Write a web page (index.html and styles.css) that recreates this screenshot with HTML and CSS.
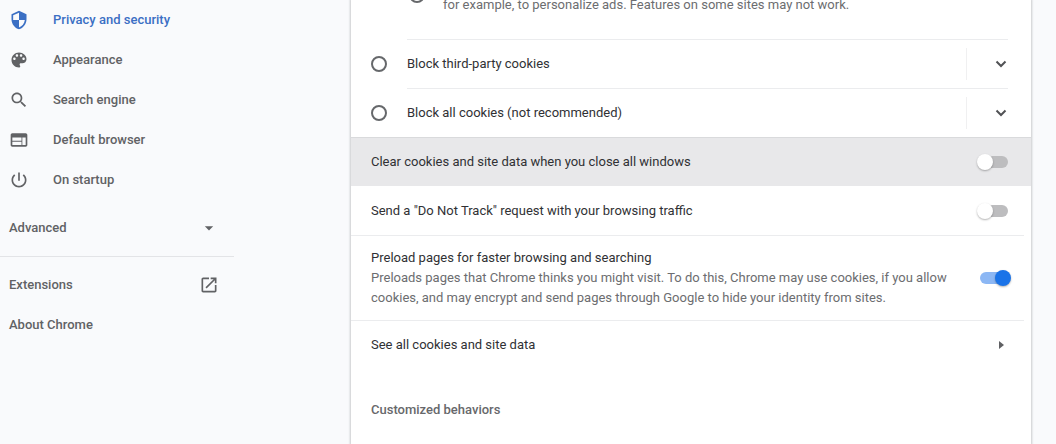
FILE: index.html
```html
<!DOCTYPE html>
<html lang="en">
<head>
<meta charset="utf-8">
<title>Settings - Privacy and security</title>
<link rel="stylesheet" href="styles.css">
</head>
<body>
<div class="page">
  <nav class="sidebar" aria-label="Settings">
    <a class="nav-item selected" href="#privacy">
      <svg class="icon" viewBox="0 0 24 24"><path d="M12 1L3 5v6c0 5.550 3.840 10.740 9 12 5.160-1.260 9-6.450 9-12V5l-9-4zm0 10.990h7c-.53 4.120-3.280 7.790-7 8.940V12H5V6.300l7-3.110v8.800z"/></svg>
      <span>Privacy and security</span>
    </a>
    <a class="nav-item" href="#appearance">
      <svg class="icon" viewBox="0 0 24 24"><path d="M12 3c-4.970 0-9 4.030-9 9s4.030 9 9 9c.83 0 1.500-.67 1.500-1.500 0-.39-.15-.74-.39-1.010-.23-.26-.38-.61-.38-.99 0-.83.67-1.500 1.500-1.500H16c2.760 0 5-2.240 5-5 0-4.420-4.030-8-9-8zm-5.500 9c-.83 0-1.500-.67-1.500-1.500S5.670 9 6.500 9 8 9.670 8 10.500 7.330 12 6.500 12zm3-4C8.670 8 8 7.330 8 6.500S8.670 5 9.500 5s1.500.67 1.500 1.500S10.330 8 9.500 8zm5 0c-.83 0-1.500-.67-1.500-1.500S13.670 5 14.500 5s1.500.67 1.500 1.500S15.330 8 14.500 8zm3 4c-.83 0-1.500-.67-1.500-1.500S16.670 9 17.500 9s1.500.67 1.500 1.500-.67 1.500-1.500 1.500z"/></svg>
      <span>Appearance</span>
    </a>
    <a class="nav-item" href="#search">
      <svg class="icon" viewBox="0 0 24 24"><path d="M15.500 14h-.79l-.28-.27C15.410 12.590 16 11.110 16 9.500 16 5.910 13.090 3 9.500 3S3 5.910 3 9.500 5.910 16 9.500 16c1.610 0 3.090-.59 4.230-1.570l.27.28v.79l5 4.990L20.490 19l-4.990-5zm-6 0C7.010 14 5 11.990 5 9.500S7.010 5 9.500 5 14 7.010 14 9.500 11.990 14 9.500 14z"/></svg>
      <span>Search engine</span>
    </a>
    <a class="nav-item" href="#default-browser">
      <svg class="icon" viewBox="0 0 24 24"><path d="M20 4H4c-1.100 0-1.990.9-1.990 2L2 18c0 1.100.9 2 2 2h16c1.100 0 2-.9 2-2V6c0-1.100-.9-2-2-2zm-5 14H4v-4h11v4zm0-5H4V9h11v4zm5 5h-4V9h4v9z"/></svg>
      <span>Default browser</span>
    </a>
    <a class="nav-item" href="#startup">
      <svg class="icon" viewBox="0 0 24 24"><path d="M13 3h-2v10h2V3zm4.830 2.170l-1.420 1.420C17.990 7.860 19 9.810 19 12c0 3.870-3.130 7-7 7s-7-3.130-7-7c0-2.190 1.010-4.140 2.580-5.420L6.170 5.170C4.230 6.820 3 9.260 3 12c0 4.970 4.030 9 9 9s9-4.030 9-9c0-2.740-1.230-5.180-3.170-6.830z"/></svg>
      <span>On startup</span>
    </a>
    <button class="nav-item advanced" type="button">
      <span>Advanced</span>
      <svg class="icon" viewBox="0 0 24 24"><path d="M7 10l5 5 5-5z"/></svg>
    </button>
    <div class="nav-more">
      <a class="nav-item spread" href="#extensions">
        <span>Extensions</span>
        <svg class="icon" viewBox="0 0 24 24"><path d="M19 19H5V5h7V3H5c-1.110 0-2 .9-2 2v14c0 1.100.89 2 2 2h14c1.100 0 2-.9 2-2v-7h-2v7zM14 3v2h3.590l-9.830 9.830 1.410 1.410L19 6.410V10h2V3h-7z"/></svg>
      </a>
      <a class="nav-item spread" href="#about"><span>About Chrome</span></a>
    </div>
  </nav>

  <main class="panel">
    <div class="scrolled-detail">
      <input class="radio" type="radio" name="detail" aria-label="Block on some sites">
      <p class="secondary">for example, to personalize ads. Features on some sites may not work.</p>
    </div>
    <div class="option">
      <input class="radio" type="radio" name="cookies" id="block-third">
      <div class="option-body">
        <label for="block-third">Block third-party cookies</label>
        <button class="expand" type="button" aria-label="Expand third-party cookies">
          <svg viewBox="0 0 12 8"><path d="M1.500 1.500L6 6l4.500-4.500"/></svg>
        </button>
      </div>
    </div>
    <div class="option">
      <input class="radio" type="radio" name="cookies" id="block-all">
      <div class="option-body">
        <label for="block-all">Block all cookies (not recommended)</label>
        <button class="expand" type="button" aria-label="Expand all cookies">
          <svg viewBox="0 0 12 8"><path d="M1.500 1.500L6 6l4.500-4.500"/></svg>
        </button>
      </div>
    </div>
    <div class="row highlighted">
      <label for="clear">Clear cookies and site data when you close all windows</label>
      <input class="toggle" type="checkbox" id="clear">
    </div>
    <div class="row">
      <label for="dnt">Send a "Do Not Track" request with your browsing traffic</label>
      <input class="toggle" type="checkbox" id="dnt">
    </div>
    <div class="row ruled tall">
      <label for="preload">Preload pages for faster browsing and searching
        <span class="secondary">Preloads pages that Chrome thinks you might visit. To do this, Chrome may use cookies, if you allow cookies, and may encrypt and send pages through Google to hide your identity from sites.</span>
      </label>
      <input class="toggle" type="checkbox" id="preload" checked>
    </div>
    <a class="row ruled" href="#all-cookies">
      <span>See all cookies and site data</span>
      <svg class="arrow" viewBox="0 0 20 20"><path d="M8 6l5 4-5 4z"/></svg>
    </a>
    <h2 class="section-title">Customized behaviors</h2>
  </main>
</div>
</body>
</html>
```
FILE: styles.css
```css
* {
  box-sizing: border-box;
}

body {
  margin: 0;
  overflow: hidden;
  background: #f9fafc;
  color: #303134;
  font: 13px/20px Roboto, "Liberation Sans", sans-serif;
}

button {
  border: 0;
  padding: 0;
  background: none;
  color: inherit;
  font: inherit;
}

a {
  color: inherit;
  text-decoration: none;
}

.page {
  display: flex;
  min-height: 100vh;
}

.sidebar {
  flex: 0 0 234px;
  margin-right: 117px;
}

.nav-item {
  display: flex;
  align-items: center;
  gap: 24px;
  width: 100%;
  height: 40px;
  padding: 0 15px 0 9px;
  color: #616265;
  font-weight: 500;
}

.nav-item.selected {
  color: #3b6fc4;
}

.icon {
  flex: none;
  width: 20px;
  height: 20px;
  fill: currentColor;
}

.nav-item.advanced,
.nav-item.spread {
  justify-content: space-between;
}

.nav-item.advanced {
  height: 56px;
}

.nav-more {
  border-top: 1px solid #e3e4e7;
  padding-top: 8px;
}

.panel {
  flex: 1;
  min-width: 0;
  margin-right: 25px;
  background: #fff;
  box-shadow: 0 0 2px 1px rgba(60, 64, 67, 0.25);
}

.scrolled-detail {
  display: flex;
  gap: 18px;
  height: 44px;
  margin-top: -5px;
  padding-left: 58px;
}

.scrolled-detail .radio {
  margin-top: -8px;
}

.secondary {
  display: block;
  margin: 0;
  color: #6c6d70;
}

.radio {
  appearance: none;
  flex: none;
  width: 16px;
  height: 16px;
  margin: 0;
  border: 2px solid #66686b;
  border-radius: 50%;
}

.option {
  display: flex;
  align-items: center;
  gap: 20px;
  padding: 0 23px 0 20px;
}

.option-body {
  flex: 1;
  display: flex;
  align-items: center;
  justify-content: space-between;
  height: 49px;
  border-top: 1px solid #ebecee;
}

.expand {
  display: flex;
  align-items: center;
  justify-content: flex-end;
  width: 42px;
  height: 32px;
  padding-right: 1px;
  border-left: 1px solid #f0f0f1;
}

.expand svg {
  width: 12px;
  height: 8px;
  fill: none;
  stroke: #515255;
  stroke-width: 2;
}

.row {
  display: flex;
  align-items: center;
  justify-content: space-between;
  gap: 24px;
  min-height: 49px;
  padding: 0 20px;
}

.row.highlighted {
  background: #e8e8ea;
  border-top: 1px solid #d9dadc;
}

.row.ruled {
  margin-right: 7px;
  padding-right: 13px;
  border-top: 1px solid #ebecee;
}

.row.tall {
  min-height: 85px;
}

.toggle {
  appearance: none;
  position: relative;
  flex: none;
  width: 28px;
  height: 12px;
  margin: 0 3px;
  border-radius: 6px;
  background: #bdbdbf;
}

.toggle::after {
  content: "";
  position: absolute;
  top: -2px;
  left: -3px;
  width: 16px;
  height: 16px;
  border-radius: 50%;
  background: #fff;
  box-shadow: 0 1px 2px rgba(0, 0, 0, 0.3);
}

.toggle:checked {
  background: #8cb7f4;
}

.toggle:checked::after {
  left: 15px;
  background: #1a73e8;
}

.arrow {
  width: 20px;
  height: 20px;
  fill: #5f6063;
}

.section-title {
  margin: 31px 20px 0;
  color: #67686b;
  font-size: 13px;
  font-weight: 500;
  line-height: 20px;
}
```
